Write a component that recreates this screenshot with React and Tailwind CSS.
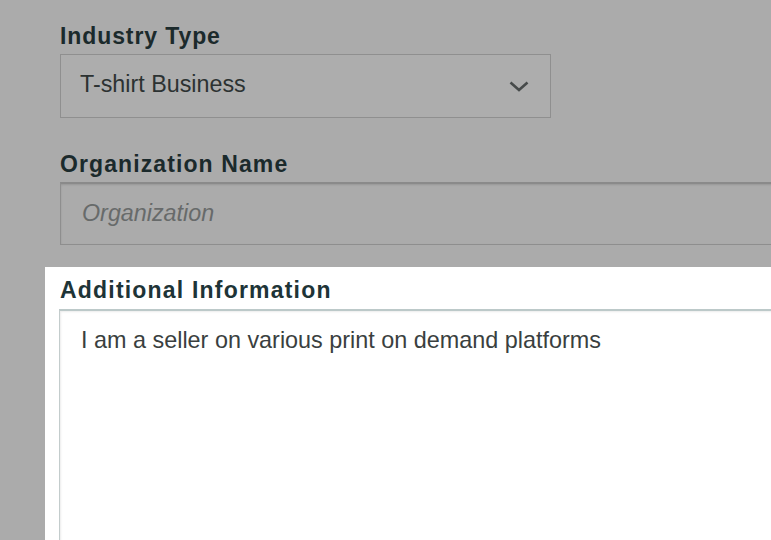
export default function App() {
  return (
    <div
      className="w-[771px] h-[540px] overflow-hidden bg-[#ababab] flex flex-col"
      style={{ fontFamily: '"Liberation Sans", Arial, sans-serif' }}
    >
      <div className="pl-[60px] pt-[22px] flex flex-col shrink-0">
        <div className="text-[23px] leading-[28px] font-bold tracking-[0.9px] text-[#1b2a2c]">
          Industry Type
        </div>
        <div className="mt-[4px] w-[491px] h-[64px] border border-[#8f8f8f] bg-[#adadad] flex items-center justify-between pl-[19px] pr-[21px] pb-[3px]">
          <span className="text-[23.3px] text-[#2c3232]">T-shirt Business</span>
          <svg width="20" height="11" viewBox="0 0 20 11" className="mt-[3px]">
            <polyline
              points="1.5,1.5 10,9 18.5,1.5"
              fill="none"
              stroke="#474b4b"
              strokeWidth="2.6"
            />
          </svg>
        </div>
        <div className="mt-[32px] text-[23px] leading-[28px] font-bold tracking-[1.1px] text-[#1b2a2c]">
          Organization Name
        </div>
        <div className="mt-[4px] w-[760px] h-[63px] border border-[#8e8e8e] border-t-2 border-t-[#8a8a8a] bg-[#ababab] flex items-center pl-[21px] pb-[1px] shadow-[inset_0_1px_2px_rgba(0,0,0,0.12)]">
          <span className="text-[23.3px] italic text-[#676a6a]">Organization</span>
        </div>
      </div>
      <div className="mt-[22px] ml-[45px] h-[400px] shrink-0 bg-white pl-[14px] pt-[9px] flex flex-col">
        <div className="pl-[1px] text-[23px] leading-[28px] font-bold tracking-[1.2px] text-[#1e3437]">
          Additional Information
        </div>
        <div className="mt-[5px] h-[400px] w-[760px] border border-[#c3cccc] border-t-2 border-t-[#bcc9c9] shadow-[inset_1px_1px_2px_rgba(0,0,0,0.08)] pl-[21px] pt-[12px]">
          <div className="text-[23.4px] text-[#3a3f40]">
            I am a seller on various print on demand platforms
          </div>
        </div>
      </div>
    </div>
  );
}
